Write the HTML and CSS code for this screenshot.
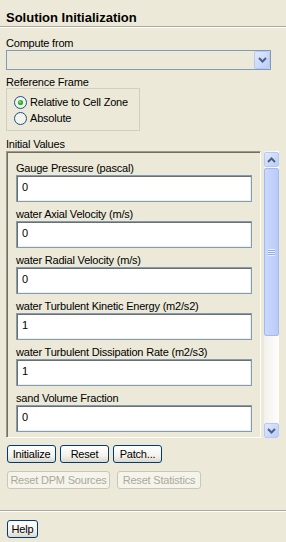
FILE: index.html
```html
<!DOCTYPE html>
<html lang="en">
<head>
    <meta charset="UTF-8">
    <meta name="viewport" content="width=device-width, initial-scale=1.0">
    <title>Solution Initialization</title>
    <link rel="stylesheet" href="styles.css">
</head>
<body>

    <div class="title">Solution Initialization</div>

    <div class="main">
        <div class="lbl compute-lbl">Compute from</div>
        <div class="combo">
            <span class="arrow-btn combo-btn">
                <svg width="9" height="6" viewBox="0 0 9 6"><polyline points="1,1 4.5,4.5 8,1" fill="none" stroke="#4d6185" stroke-width="2"/></svg>
            </span>
        </div>

        <div class="lbl frame-lbl">Reference Frame</div>
        <div class="group">
            <label class="radio">
                <svg width="13" height="13" viewBox="0 0 13 13">
                    <circle cx="6.5" cy="6.5" r="6" fill="#f4f4ef" stroke="#1c5180"/>
                    <circle cx="6.5" cy="6.5" r="2.6" fill="#2bb52b"/>
                    <circle cx="6" cy="6" r="1" fill="#8fe08f"/>
                </svg>
                Relative to Cell Zone
            </label>
            <label class="radio">
                <svg width="13" height="13" viewBox="0 0 13 13">
                    <circle cx="6.5" cy="6.5" r="6" fill="#f4f4ef" stroke="#1c5180"/>
                </svg>
                Absolute
            </label>
        </div>

        <div class="lbl values-lbl">Initial Values</div>
        <div class="values">
            <div class="panel">
                <div class="field">
                    <div class="field-lbl">Gauge Pressure (pascal)</div>
                    <input type="text" value="0">
                </div>
                <div class="field">
                    <div class="field-lbl">water Axial Velocity (m/s)</div>
                    <input type="text" value="0">
                </div>
                <div class="field">
                    <div class="field-lbl">water Radial Velocity (m/s)</div>
                    <input type="text" value="0">
                </div>
                <div class="field">
                    <div class="field-lbl">water Turbulent Kinetic Energy (m2/s2)</div>
                    <input type="text" value="1">
                </div>
                <div class="field">
                    <div class="field-lbl">water Turbulent Dissipation Rate (m2/s3)</div>
                    <input type="text" value="1">
                </div>
                <div class="field">
                    <div class="field-lbl">sand Volume Fraction</div>
                    <input type="text" value="0">
                </div>
            </div>
            <div class="scrollbar">
                <span class="arrow-btn">
                    <svg width="9" height="6" viewBox="0 0 9 6"><polyline points="1,5 4.5,1.5 8,5" fill="none" stroke="#4d6185" stroke-width="2"/></svg>
                </span>
                <div class="track">
                    <div class="thumb">
                        <span class="grip"></span>
                    </div>
                </div>
                <span class="arrow-btn">
                    <svg width="9" height="6" viewBox="0 0 9 6"><polyline points="1,1 4.5,4.5 8,1" fill="none" stroke="#4d6185" stroke-width="2"/></svg>
                </span>
            </div>
        </div>

        <div class="btn-row">
            <button class="btn w49">Initialize</button>
            <button class="btn w49">Reset</button>
            <button class="btn w49">Patch...</button>
        </div>
        <div class="btn-row row2">
            <button class="btn w103" disabled>Reset DPM Sources</button>
            <button class="btn w84" disabled>Reset Statistics</button>
        </div>
    </div>

    <div class="footer">
        <button class="btn help">Help</button>
    </div>

</body>
</html>
```

FILE: styles.css
```css
body {
    margin: 0;
    background: #ece9d8;
    font-family: "Liberation Sans", Arial, sans-serif;
    font-size: 11px;
    letter-spacing: -0.2px;
    color: #000;
    width: 286px;
    height: 542px;
    overflow: hidden;
}
.title {
    font-size: 13px;
    font-weight: bold;
    letter-spacing: 0;
    line-height: 15px;
    padding: 10px 6px 1px;
    border-bottom: 1px solid #aca899;
    box-shadow: 0 1px 0 #fff;
}
.main {
    padding: 0 6px;
}
.lbl {
    line-height: 13px;
}
.compute-lbl {
    margin-top: 10px;
}
.combo {
    width: 265px;
    height: 20px;
    box-sizing: border-box;
    border: 1px solid #7f9db9;
    display: flex;
    justify-content: flex-end;
}
.arrow-btn {
    display: flex;
    align-items: center;
    justify-content: center;
    box-sizing: border-box;
    width: 15px;
    height: 15px;
    border: 1px solid #b7c8f2;
    border-radius: 2px;
    background: linear-gradient(135deg, #dfe8fd, #bccdf9);
}
.combo-btn {
    width: 16px;
    height: 18px;
}
.frame-lbl {
    margin-top: 6px;
    line-height: 12px;
}
.group {
    width: 134px;
    box-sizing: border-box;
    border: 1px solid #d0d0bf;
    padding: 5px 7px 4px;
}
.radio {
    display: flex;
    align-items: center;
    gap: 3px;
    height: 16px;
    white-space: nowrap;
}
.radio svg {
    flex: none;
}
.values-lbl {
    margin-top: 6px;
    line-height: 14px;
}
.values {
    display: flex;
    gap: 3px;
    height: 287px;
}
.panel {
    width: 255px;
    box-sizing: border-box;
    border-top: 1px solid #9d9a8c;
    border-left: 1px solid #9d9a8c;
    border-right: 1px solid #fff;
    border-bottom: 1px solid #fff;
    box-shadow: inset 1px 1px 0 #716f64;
    padding: 9px 8px 0 9px;
    overflow: hidden;
}
.field {
    margin-bottom: 5px;
}
.field-lbl {
    line-height: 14px;
    white-space: nowrap;
}
.field input {
    display: block;
    width: 236px;
    height: 27px;
    box-sizing: border-box;
    border: 1px solid #7f9db9;
    box-shadow: inset 1px 1px 0 #716f64, inset -1px -1px 0 #f1efe2;
    padding: 3px 5px 7px;
    margin: 0;
    font-family: "Liberation Sans", Arial, sans-serif;
    font-size: 11px;
    line-height: 13px;
    color: #000;
    background: #fff;
    outline: none;
}
.scrollbar {
    width: 15px;
    display: flex;
    flex-direction: column;
    padding-top: 1px;
    background: linear-gradient(to right, #f3f1ec, #fefefe);
}
.track {
    flex: 1;
    padding: 1px 0;
}
.thumb {
    height: 168px;
    box-sizing: border-box;
    border: 1px solid #a4b9ef;
    border-radius: 2px;
    background: linear-gradient(to right, #cbd8fc, #b9cbf7);
    display: flex;
    align-items: center;
    justify-content: center;
}
.grip {
    width: 7px;
    height: 7px;
    background: repeating-linear-gradient(to bottom, #eef3fe 0 1px, #8fa9e9 1px 2px);
}
.btn-row {
    display: flex;
    gap: 4px;
    margin: 7px 0 0 1px;
}
.row2 {
    gap: 7px;
    margin-top: 8px;
}
.btn {
    height: 18px;
    box-sizing: border-box;
    padding: 0;
    border: 1px solid #003c74;
    border-radius: 3px;
    background: linear-gradient(#ffffff, #f3f2ed 60%, #dcd8cc);
    font-family: "Liberation Sans", Arial, sans-serif;
    font-size: 11px;
    letter-spacing: -0.2px;
    line-height: 16px;
    color: #000;
    white-space: nowrap;
}
.btn:disabled {
    border-color: #c9c7ba;
    background: #f5f4ea;
    color: #aca899;
}
.w49 { width: 49px; }
.w103 { width: 103px; }
.w84 { width: 84px; }
.footer {
    margin-top: 21px;
    border-top: 1px solid #aca899;
    box-shadow: inset 0 1px 0 #fff;
    padding: 9px 7px 0;
}
.help {
    width: 31px;
}
```
